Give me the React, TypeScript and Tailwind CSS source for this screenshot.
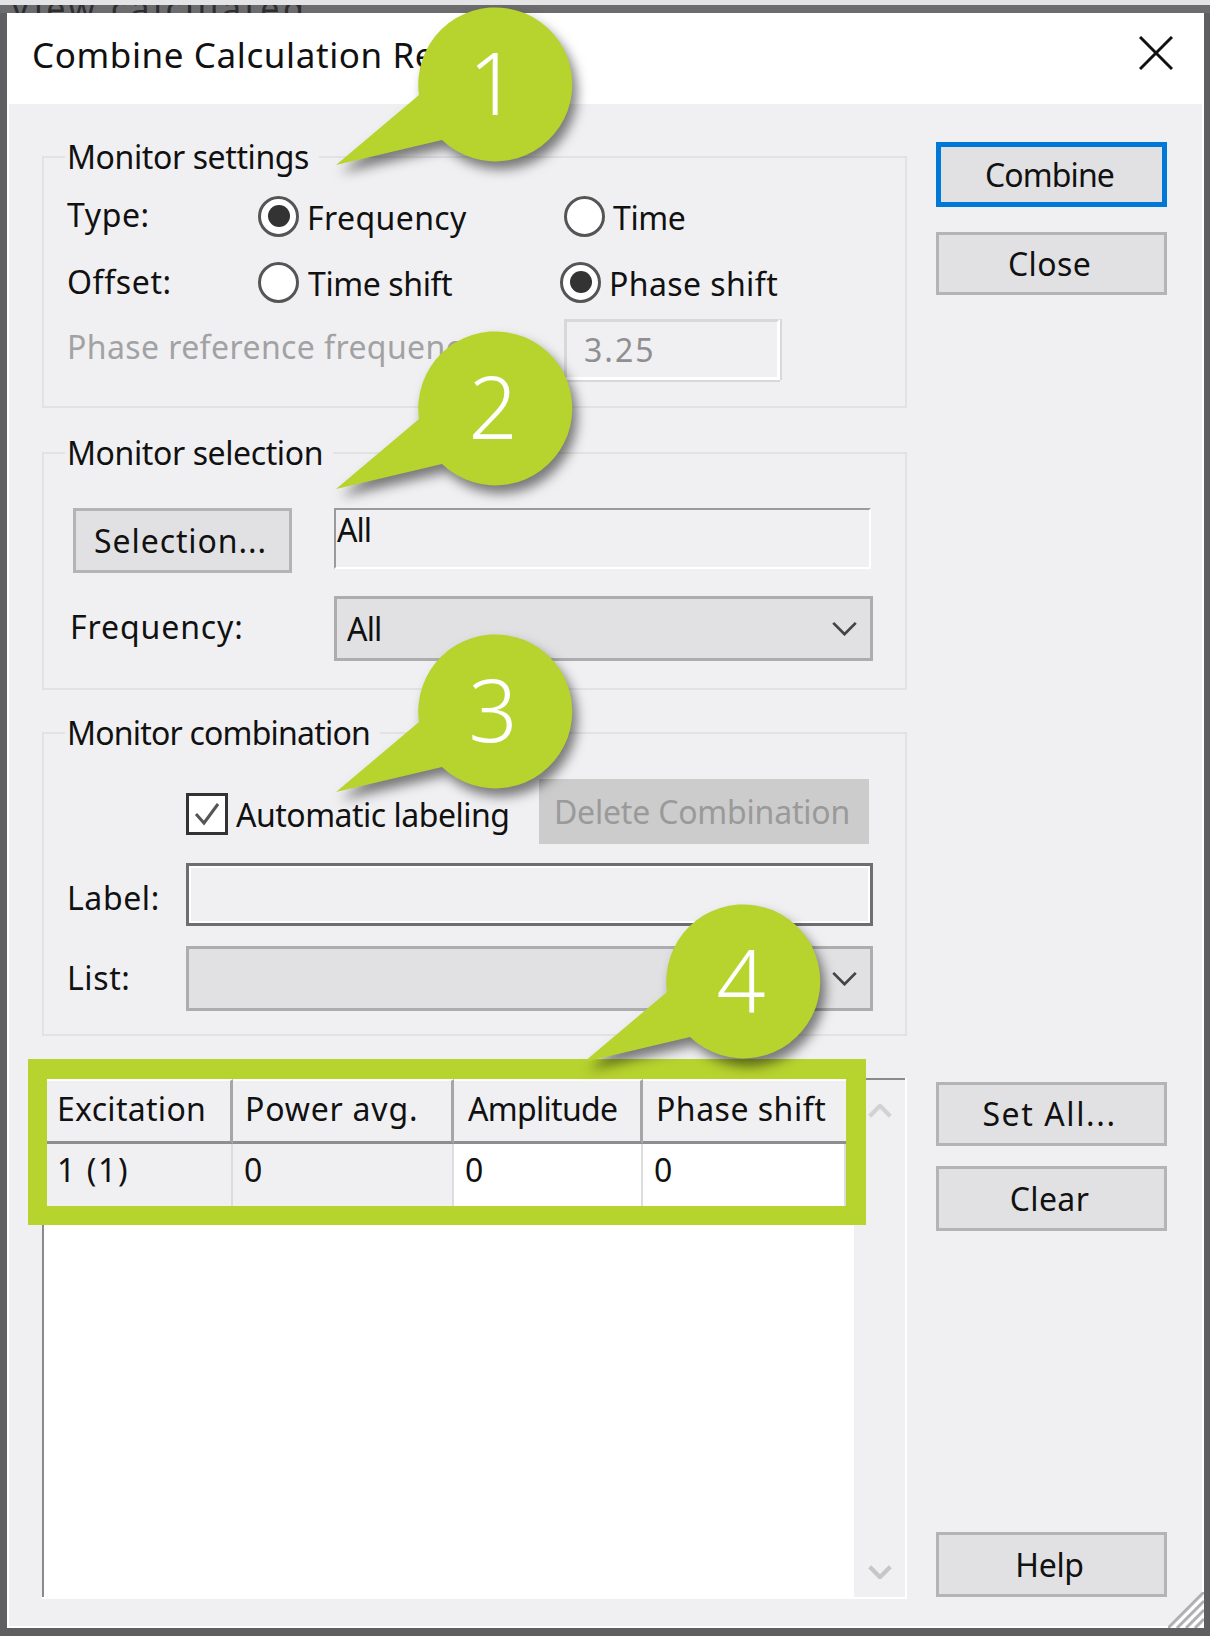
import type { ReactNode } from 'react';

const font = { fontFamily: '"Noto Sans", "Open Sans", sans-serif' };

function Legend({ children, className }: { children: ReactNode; className?: string }) {
  return (
    <div className={`-mt-[21px] ml-[21px] w-fit h-[40px] px-[2px] pr-[10px] bg-[#f0f0f2] text-[32px] leading-[40px] text-[#111] ${className ?? 'tracking-[-0.4px]'}`}>
      {children}
    </div>
  );
}

function Radio({ checked, className }: { checked?: boolean; className?: string }) {
  return (
    <div className={`w-[41px] h-[41px] shrink-0 rounded-full border-[3px] border-[#555] bg-white flex items-center justify-center ${className ?? ''}`}>
      {checked && <div className="w-[22px] h-[22px] rounded-full bg-[#333]" />}
    </div>
  );
}

function Btn({ label, disabled, focused, className }: { label: string; disabled?: boolean; focused?: boolean; className?: string }) {
  return (
    <div
      className={`flex items-center justify-center pr-[4px] text-[32px] ${
        focused ? 'border-[5px] border-[#0078d7] bg-[#e1e1e3] text-[#111]' : disabled ? 'bg-[#cccccd] text-[#9a9a9a]' : 'border-[3px] border-[#b4b4b6] bg-[#e1e1e3] text-[#111]'
      } ${className ?? ''}`}
    >
      {label}
    </div>
  );
}

function Chevron({ className, weight = 3 }: { className?: string; weight?: number }) {
  return (
    <svg viewBox="0 0 28 16" className={className} fill="none" stroke="currentColor" strokeWidth={weight}>
      <polyline points="2,2 14,14 26,2" />
    </svg>
  );
}

function Select({ value, className }: { value?: string; className?: string }) {
  return (
    <div className={`flex items-center justify-between border-[3px] border-[#adadaf] bg-[#e1e1e3] pl-[10px] pr-[12px] text-[32px] tracking-[-0.8px] text-[#111] ${className ?? ''}`}>
      <span>{value}</span>
      <Chevron className="w-[27px] h-[15px] text-[#444]" />
    </div>
  );
}

function Bubble({ n, className }: { n: number; className: string }) {
  return (
    <div className={`absolute w-[340px] h-[190px] ${className}`}>
      <svg viewBox="-170 -90 340 190" className="w-full h-full overflow-visible drop-shadow-[5px_8px_6px_rgba(0,0,0,0.5)]">
        <path d="M-159 76 L-76 6 A77 77 0 1 1 -53 51 Z" fill="#b7d32e" />
      </svg>
      <div className="absolute left-[168px] top-[83px] -translate-x-1/2 -translate-y-1/2 text-[86px] leading-none font-light text-white">{n}</div>
    </div>
  );
}

function HeadCell({ children, className }: { children: ReactNode; className: string }) {
  return (
    <div className={`h-[65px] bg-[#f0f0f2] border-t-2 border-t-white border-b-[3px] border-b-[#8e8e90] text-[32px] leading-[56px] text-[#111] ${className}`}>
      {children}
    </div>
  );
}

function BodyCell({ children, first, white }: { children: ReactNode; first?: boolean; white?: boolean }) {
  return (
    <div className={`h-[62px] border-r-2 border-r-[#dddddf] text-[32px] leading-[52px] text-[#111] ${first ? 'pl-[10px] tracking-[1.6px]' : 'pl-[11px]'} ${white ? 'bg-white' : 'bg-[#f0f0f2]'}`}>
      {children}
    </div>
  );
}

export default function App() {
  return (
    <div className="relative w-[1210px] h-[1636px] overflow-hidden bg-[#5f5f61]" style={font}>
      <div className="h-[13px] overflow-hidden border-t-[5px] border-[#e4e4e6] bg-[#6c6c6e] pl-[10px]">
        <div className="-mt-[14px] text-[34px] leading-[34px] tracking-[3.5px] text-[#2e2e30]">View calculated</div>
      </div>
      <div className="relative ml-[7px] w-[1197px] h-[1615px] bg-[#f0f0f2] shadow-[inset_2px_0_0_#fff,inset_-2px_0_0_#fff,inset_0_-2px_0_#fff]">
        <div className="h-[91px] bg-white flex items-center justify-between pl-[25px] pr-[31px] pb-[6px]">
          <span className="text-[35px] tracking-[0.6px] text-[#111]">Combine Calculation Results</span>
          <svg viewBox="0 0 34 34" className="w-[34px] h-[34px] -mt-[6px]" stroke="#111" strokeWidth="3">
            <line x1="1" y1="1" x2="33" y2="33" />
            <line x1="33" y1="1" x2="1" y2="33" />
          </svg>
        </div>

        <div className="flex pl-[35px]">
          <div className="w-[865px] flex flex-col pt-[52px]">
            <section className="h-[252px] border-2 border-[#e2e2e4]">
              <Legend>Monitor settings</Legend>
              <div className="grid grid-cols-[191px_306px_1fr] grid-rows-[66px_66px_64px] items-center pl-[23px] mt-[6px] text-[32px] text-[#111]">
                <span className="-mt-[2px] tracking-[0.6px]">Type:</span>
                <div className="flex items-center gap-[8px]"><Radio checked /><span className="mt-[3px] tracking-[0.4px]">Frequency</span></div>
                <div className="flex items-center gap-[8px]"><Radio /><span className="mt-[3px] tracking-[-0.4px]">Time</span></div>
                <span className="tracking-[0.6px]">Offset:</span>
                <div className="flex items-center gap-[9px]"><Radio /><span className="mt-[3px] tracking-[-0.4px]">Time shift</span></div>
                <div className="flex items-center gap-[8px] -ml-[4px]"><Radio checked /><span className="mt-[3px] tracking-[0.4px]">Phase shift</span></div>
                <span className="col-span-2 text-[#a2a2a4] tracking-[0.4px]">Phase reference frequency:</span>
                <div className="w-[216px] h-[61px] mt-[4px] border-[3px] border-[#d8d8da] border-b-white border-r-white shadow-[0_2px_0_#d8d8da,2px_0_0_#d8d8da] pl-[17px] leading-[56px] text-[#8f8f91] tracking-[2px]">3.25</div>
              </div>
            </section>

            <section className="h-[238px] mt-[44px] border-2 border-[#e2e2e4]">
              <Legend>Monitor selection</Legend>
              <div className="flex items-start pl-[29px] mt-[35px]">
                <Btn label="Selection..." className="w-[219px] h-[65px] tracking-[0.9px]" />
                <div className="ml-[42px] w-[537px] h-[61px] border-2 border-t-[#9a9a9c] border-l-[#9a9a9c] border-b-white border-r-white pl-[1px] text-[32px] leading-[40px] tracking-[-1px] text-[#111]">All</div>
              </div>
              <div className="flex items-center pl-[26px] mt-[23px]">
                <span className="w-[264px] -mt-[4px] text-[32px] tracking-[0.9px] text-[#111]">Frequency:</span>
                <Select value="All" className="w-[539px] h-[65px]" />
              </div>
            </section>

            <section className="h-[304px] mt-[42px] border-2 border-[#e2e2e4]">
              <Legend className="tracking-[-0.8px]">Monitor combination</Legend>
              <div className="flex items-center pl-[142px] mt-[26px] h-[65px]">
                <div className="w-[42px] h-[42px] mt-[4px] border-[3px] border-[#333] bg-white flex items-center justify-center">
                  <svg viewBox="0 0 30 30" className="w-[30px] h-[30px]" fill="none" stroke="#555" strokeWidth="3">
                    <polyline points="4,15 12,24 26,5" />
                  </svg>
                </div>
                <span className="ml-[8px] mt-[6px] w-[303px] text-[32px] tracking-[-0.5px] text-[#111]">Automatic labeling</span>
                <Btn label="Delete Combination" disabled className="w-[330px] h-[65px] tracking-[-0.2px]" />
              </div>
              <div className="flex items-center pl-[23px] mt-[19px]">
                <span className="w-[119px] mt-[6px] text-[32px] tracking-[0.6px] text-[#111]">Label:</span>
                <div className="w-[687px] h-[63px] border-[3px] border-[#6e6e70] shadow-[inset_0_0_0_2px_#fff]" />
              </div>
              <div className="flex items-center pl-[23px] mt-[20px]">
                <span className="w-[119px] -mt-[2px] text-[32px] tracking-[0.6px] text-[#111]">List:</span>
                <Select className="w-[687px] h-[65px]" />
              </div>
            </section>

            <section className="relative h-[521px] mt-[42px] flex border-b-2 border-r-2 border-white">
              <div className="w-[812px] bg-white border-l-2 border-t-2 border-[#8a8a8c]" />
              <div className="flex-1 bg-[#f0f0f2] border-t-2 border-[#8a8a8c] flex flex-col justify-between items-center pt-[24px] pb-[18px]">
                <Chevron weight={5} className="w-[24px] h-[14px] rotate-180 text-[#d2d2d4]" />
                <Chevron weight={5} className="w-[24px] h-[14px] text-[#c6c6c8]" />
              </div>
              <div className="absolute -left-[14px] -top-[19px] w-[838px] border-t-[20px] border-l-[19px] border-r-[20px] border-b-[19px] border-[#b7d32e] grid grid-cols-[186px_221px_189px_203px]">
                <HeadCell className="pl-[10px] tracking-[0.3px] border-r-[3px] border-r-[#a6a6a8]">Excitation</HeadCell>
                <HeadCell className="pl-[12px] tracking-[0.8px] border-r-[3px] border-r-[#a6a6a8]">Power avg.</HeadCell>
                <HeadCell className="pl-[14px] tracking-[-0.7px] border-r-[3px] border-r-[#a6a6a8]">Amplitude</HeadCell>
                <HeadCell className="pl-[13px] tracking-[0.5px]">Phase shift</HeadCell>
                <BodyCell first>1 (1)</BodyCell>
                <BodyCell>0</BodyCell>
                <BodyCell white>0</BodyCell>
                <BodyCell white>0</BodyCell>
              </div>
            </section>
          </div>

          <div className="w-[231px] ml-[29px] flex flex-col pt-[38px]">
            <Btn label="Combine" focused className="h-[65px] tracking-[-0.9px]" />
            <Btn label="Close" className="h-[63px] mt-[25px] tracking-[0.4px]" />
            <Btn label="Set All..." className="h-[64px] mt-[787px] tracking-[1.6px]" />
            <Btn label="Clear" className="h-[65px] mt-[20px] tracking-[0.4px]" />
            <Btn label="Help" className="h-[65px] mt-[301px] tracking-[-0.3px]" />
          </div>
        </div>

        <svg viewBox="0 0 36 36" className="absolute right-0 bottom-0 w-[36px] h-[36px]" strokeWidth="3">
          <line x1="0" y1="36" x2="36" y2="0" stroke="#b0b0b2" />
          <line x1="5" y1="36" x2="36" y2="5" stroke="#fff" />
          <line x1="9" y1="36" x2="36" y2="9" stroke="#b0b0b2" />
          <line x1="14" y1="36" x2="36" y2="14" stroke="#fff" />
          <line x1="18" y1="36" x2="36" y2="18" stroke="#b0b0b2" />
          <line x1="23" y1="36" x2="36" y2="23" stroke="#fff" />
          <line x1="27" y1="36" x2="36" y2="27" stroke="#b0b0b2" />
          <line x1="32" y1="36" x2="36" y2="32" stroke="#fff" />
        </svg>
      </div>

      <Bubble n={1} className="left-[325px] top-[-1px]" />
      <Bubble n={2} className="left-[325px] top-[323px]" />
      <Bubble n={3} className="left-[325px] top-[626px]" />
      <Bubble n={4} className="left-[573px] top-[896px]" />
    </div>
  );
}
